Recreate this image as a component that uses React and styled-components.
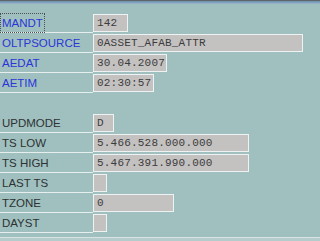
import { createGlobalStyle, styled } from "styled-components"

const Global = createGlobalStyle`
    html, body {
        margin: 0;
        padding: 0;
        background: #9fc0bf;
    }
`
const Screen = styled.div`
    width: 320px;
    height: 241px;
    background: #9fc0bf;
    display: flex;
    flex-direction: column;
    overflow: hidden;
    font-family: "Liberation Sans", Arial, sans-serif;
`
const TopBar = styled.div`
    height: 4px;
    flex-shrink: 0;
    background: linear-gradient(to bottom, #5c6668 0, #5c6668 1px, #6f8cae 1px, #86a6bf 3px, #a4bcc6 4px);
`
const Form = styled.div`
    flex: 1;
    padding-top: 9px;
    display: flex;
    flex-direction: column;
`
const Row = styled.div`
    display: flex;
    height: 20px;
    flex-shrink: 0;
`
const Label = styled.div`
    width: 93px;
    box-sizing: border-box;
    height: 20px;
    padding-left: 2px;
    display: flex;
    align-items: center;
    font-size: 11.5px;
    color: ${props => props.$link ? "#2b35d8" : "#2e3232"};
    border-bottom: 1px solid ${props => props.$line ? "#e6eeee" : "transparent"};
`
const Focus = styled.span`
    margin-left: -1px;
    padding: 2px 1px 2px 1px;
    height: 14px;
    line-height: 14px;
    outline: 1px dotted #4a5050;
    outline-offset: 0;
`
const Field = styled.div`
    margin-top: 1px;
    width: ${props => props.$w}px;
    height: 18px;
    box-sizing: border-box;
    background: #c4c1c1;
    border: 1px solid #eef2f2;
    padding-left: 3px;
    font-family: "Liberation Mono", "Courier New", monospace;
    font-size: 11px;
    letter-spacing: 0.2px;
    color: #3c3c3c;
    line-height: 16px;
    white-space: nowrap;
    overflow: hidden;
`
const Bottom = styled.div`
    margin-top: auto;
    height: 4px;
    background: linear-gradient(to bottom, #d8e4e4 0, #d8e4e4 1px, #b4cccc 1px);
`

const top = [
    { label: "MANDT", value: "142", w: 35, focus: true },
    { label: "OLTPSOURCE", value: "0ASSET_AFAB_ATTR", w: 210 },
    { label: "AEDAT", value: "30.04.2007", w: 74 },
    { label: "AETIM", value: "02:30:57", w: 61 },
]
const bottom = [
    { label: "UPDMODE", value: "D", w: 21 },
    { label: "TS LOW", value: "5.466.528.000.000", w: 156 },
    { label: "TS HIGH", value: "5.467.391.990.000", w: 156 },
    { label: "LAST TS", value: "", w: 14 },
    { label: "TZONE", value: "0", w: 81 },
    { label: "DAYST", value: "", w: 14 },
]

export default function App() {
    return (
        <>
            <Global />
            <Screen>
                <TopBar />
                <Form>
                    {top.map(f => (
                        <Row key={f.label}>
                            <Label $link $line>
                                {f.focus ? <Focus>{f.label}</Focus> : f.label}
                            </Label>
                            <Field $w={f.w}>{f.value}</Field>
                        </Row>
                    ))}
                    <Row />
                    {bottom.map(f => (
                        <Row key={f.label}>
                            <Label $line>{f.label}</Label>
                            <Field $w={f.w}>{f.value}</Field>
                        </Row>
                    ))}
                    <Bottom />
                </Form>
            </Screen>
        </>
    )
}
